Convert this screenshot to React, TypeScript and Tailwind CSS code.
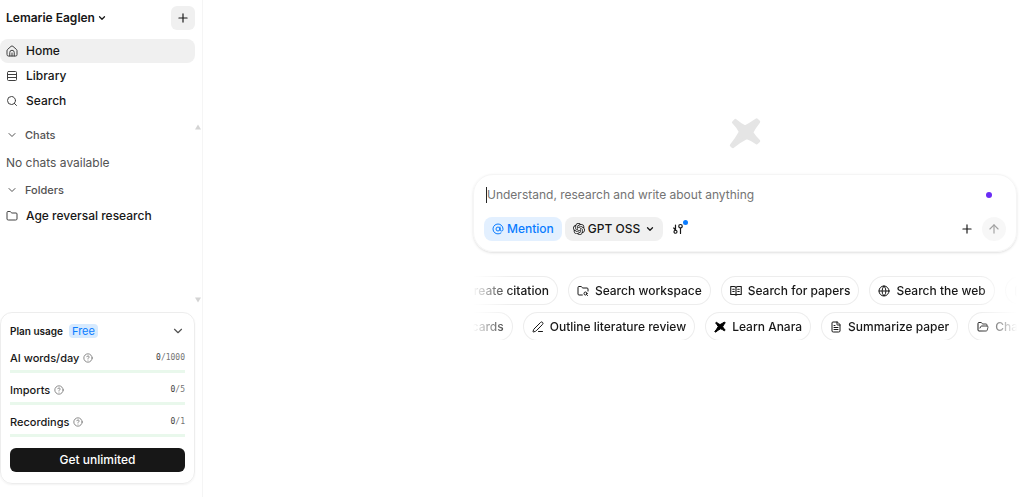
import { useState } from "react";
import type { ReactNode } from "react";
import {
  ArrowUp,
  AtSign,
  ChevronDown,
  CircleHelp,
  FileText,
  Folder,
  FolderOpen,
  FolderSearch,
  Globe,
  Layers,
  PenLine,
  Plus,
  Quote,
  Rows3,
  Search,
} from "lucide-react";
import { SiOpenai } from "react-icons/si";

interface Usage {
  label: string;
  used: number;
  limit: number;
}

interface Suggestion {
  label: string;
  icon: ReactNode;
}

const HomeIcon = () => (
  <svg viewBox="0 0 24 24" className="w-3 h-3 shrink-0" fill="none" stroke="currentColor" strokeWidth="2" strokeLinecap="round" strokeLinejoin="round">
    <path d="M2 11.2a3 3 0 0 1 1.100-2.300l7-6.200a3 3 0 0 1 3.800 0l7 6.200a3 3 0 0 1 1.100 2.300V19.500a2.500 2.500 0 0 1-2.500 2.500H4.500A2.500 2.500 0 0 1 2 19.500z" />
    <path d="M7.500 22v-7a4.500 4.500 0 0 1 9 0v7M12 16v6" />
  </svg>
);

const BookIcon = () => (
  <svg viewBox="0 0 24 24" className="w-3 h-3 shrink-0" fill="none" stroke="currentColor" strokeWidth="2.200" strokeLinecap="round" strokeLinejoin="round">
    <path d="M12 5C11 3.500 9.500 3 8 3H1.500v16H9c1.500 0 2.500.5 3 1.500.5-1 1.500-1.500 3-1.500h7.500V3H16c-1.500 0-3 .5-4 2zM12 5v15" />
    <path d="M5.500 8.500h3M5.500 13h3M15.500 8.500h3M15.500 13h3" />
  </svg>
);

const TuneIcon = () => (
  <svg viewBox="0 0 24 24" className="w-3 h-3" fill="none" stroke="currentColor" strokeWidth="2.400" strokeLinecap="round" strokeLinejoin="round">
    <path d="M7 4v10M17 10v11M3.500 10 7 14" />
    <circle cx="7" cy="17.500" r="3" />
    <circle cx="17" cy="6.500" r="3.500" />
  </svg>
);

const StarMark = ({ className }: { className: string }) => (
  <svg viewBox="0 0 30 30" className={className} fill="currentColor" stroke="currentColor" strokeWidth="2.500" strokeLinejoin="round">
    <path d="M6 3Q10 6.500 15 9 19.500 7 26 2.500L28 4.500Q24 9.500 21.500 14.500 24 18.500 28 22.500L26 24.500Q21 21 16.500 19.500 10.500 22.500 3.500 28L2 26.500Q7 20.500 10.500 14 8 9 4 5z" />
  </svg>
);

const navItems = [
  { label: "Home", icon: <HomeIcon />, active: true },
  { label: "Library", icon: <Rows3 className="w-3 h-3" />, active: false },
  { label: "Search", icon: <Search className="w-3 h-3" />, active: false },
];

const usages: Usage[] = [
  { label: "AI words/day", used: 0, limit: 1000 },
  { label: "Imports", used: 0, limit: 5 },
  { label: "Recordings", used: 0, limit: 1 },
];

const topSuggestions: Suggestion[] = [
  { label: "Create citation", icon: <Quote className="w-3 h-3" /> },
  { label: "Search workspace", icon: <FolderSearch className="w-3 h-3" /> },
  { label: "Search for papers", icon: <BookIcon /> },
  { label: "Search the web", icon: <Globe className="w-3 h-3" /> },
  { label: "Transcribe audio", icon: <FileText className="w-3 h-3" /> },
];

const bottomSuggestions: Suggestion[] = [
  { label: "Flashcards", icon: <Layers className="w-3 h-3" /> },
  { label: "Outline literature review", icon: <PenLine className="w-3 h-3" /> },
  { label: "Learn Anara", icon: <StarMark className="w-3 h-3 text-black" /> },
  { label: "Summarize paper", icon: <FileText className="w-3 h-3" /> },
  { label: "Chat with folder", icon: <FolderOpen className="w-3 h-3" /> },
];

const SectionHeader = ({ label }: { label: string }) => (
  <button className="flex h-6 items-center gap-[7px] px-1.5 text-[11px] font-medium text-neutral-600">
    <ChevronDown className="w-3 h-3" />
    {label}
  </button>
);

const SuggestionRow = ({ items, className }: { items: Suggestion[]; className: string }) => (
  <div className={`flex gap-2.5 ${className}`}>
    {items.map((item) => (
      <button
        key={item.label}
        className="flex h-[29px] shrink-0 items-center gap-1.5 whitespace-nowrap rounded-full border border-neutral-200/70 bg-white px-2 font-medium"
      >
        {item.icon}
        {item.label}
      </button>
    ))}
  </div>
);

const Sidebar = () => (
  <aside className="flex w-[203px] shrink-0 flex-col border-r border-neutral-100 pb-[13px]">
    <div className="flex items-center justify-between pl-1.5 pr-[7px] pt-1.5">
      <button className="flex items-center gap-0.5 font-semibold">
        Lemarie Eaglen
        <ChevronDown className="w-2.5 h-2.5" strokeWidth={3} />
      </button>
      <button aria-label="New" className="flex h-6 w-6 items-center justify-center rounded-md bg-[#f0f0f0]">
        <Plus className="w-3.5 h-3.5" />
      </button>
    </div>

    <nav className="mt-[9px] flex flex-col gap-px pr-[7px]">
      {navItems.map((item) => (
        <a
          key={item.label}
          href="#"
          className={`flex h-6 items-center gap-2 rounded-lg px-1.5 font-medium ${item.active ? "bg-[#f0f0f0]" : ""}`}
        >
          <span className="text-neutral-700">{item.icon}</span>
          {item.label}
        </a>
      ))}
    </nav>

    <div className="mt-2.5 flex flex-1 justify-between">
      <div>
        <SectionHeader label="Chats" />
        <p className="flex h-[31px] items-center px-1.5 text-neutral-600">No chats available</p>
        <SectionHeader label="Folders" />
        <a href="#" className="flex h-7 items-center gap-2 px-1.5 font-medium">
          <Folder className="w-3 h-3 text-neutral-700" />
          Age reversal research
        </a>
      </div>
      <div className="flex flex-col justify-between pb-px pr-px pt-px text-neutral-300">
        <svg viewBox="0 0 6 5" className="w-1.5 h-1.5" fill="currentColor">
          <path d="M3 0 6 5H0z" />
        </svg>
        <svg viewBox="0 0 6 5" className="w-1.5 h-1.5" fill="currentColor">
          <path d="M3 5 6 0H0z" />
        </svg>
      </div>
    </div>

    <section className="mr-[7px] mt-2 rounded-xl border border-neutral-200/70 px-[9px] pb-[11px] pt-2 shadow-xs">
      <div className="flex h-5 items-center justify-between">
        <div className="flex items-center gap-1.5">
          <h2 className="text-[10px] font-semibold">Plan usage</h2>
          <span className="rounded-sm bg-[#d6eaff] px-[3px] text-[11px] leading-[14px] text-[#0a7cff]">Free</span>
        </div>
        <button aria-label="Collapse plan usage">
          <ChevronDown className="w-3.5 h-3.5 text-neutral-600" />
        </button>
      </div>
      <div className="flex flex-col gap-2 pt-2">
        {usages.map((usage) => (
          <div key={usage.label} className="flex flex-col gap-[3px]">
            <div className="flex h-[18px] items-center justify-between">
              <span className="flex items-center gap-1 text-[11px] font-medium">
                {usage.label}
                <CircleHelp className="w-2.5 h-2.5 text-neutral-500" />
              </span>
              <span className="font-['DejaVu_Sans_Mono',monospace] text-[8px] text-neutral-500">
                <span className="text-neutral-700">{usage.used}</span>/{usage.limit}
              </span>
            </div>
            <div className="h-[3px] bg-[#e9f8ec]">
              <div className="h-full bg-green-500" style={{ width: `${(usage.used / usage.limit) * 100}%` }} />
            </div>
          </div>
        ))}
      </div>
      <button className="mt-[11px] h-6 w-full rounded-md bg-[#171717] font-medium text-white">Get unlimited</button>
    </section>
  </aside>
);

const App = () => {
  const [prompt, setPrompt] = useState("");

  return (
    <div className="flex min-h-screen bg-white font-['Inter',sans-serif] text-[12px] leading-4 text-neutral-900">
      <Sidebar />

      <main className="flex min-w-0 flex-1 flex-col items-end pr-[7px] pt-[117px]">
        <div className="flex w-full max-w-[544px] flex-col">
          <StarMark className="h-8 w-8 self-center text-neutral-200" />

          <form className="mt-[25px] rounded-[20px] border border-neutral-100 px-2.5 pb-2.5 pt-3 shadow-sm" onSubmit={(e) => e.preventDefault()}>
            <div className="flex h-4 items-center pl-0.5 pr-3.5">
              <span className="h-4 w-px bg-neutral-800" />
              <input
                type="text"
                aria-label="Prompt"
                placeholder="Understand, research and write about anything"
                className="min-w-0 flex-1 placeholder:text-neutral-500 focus:outline-none"
                value={prompt}
                onChange={(e) => setPrompt(e.target.value)}
              />
              <span className="h-1.5 w-1.5 rounded-full bg-[#6a2cf5]" />
            </div>
            <div className="mt-3.5 flex items-center justify-between">
              <div className="flex items-center gap-[3px]">
                <button className="flex h-6 items-center gap-[3px] rounded-lg bg-[#e3f0ff] px-2 font-medium text-[#0a7cff]">
                  <AtSign className="w-3 h-3" />
                  Mention
                </button>
                <button className="flex h-6 items-center gap-[3px] rounded-lg bg-[#f0f0f0] px-2 font-medium">
                  <SiOpenai className="w-3 h-3" />
                  GPT OSS
                  <ChevronDown className="ml-0.5 w-2.5 h-2.5" strokeWidth={3} />
                </button>
                <button aria-label="Settings" className="relative flex h-6 w-6 items-center justify-center">
                  <TuneIcon />
                  <span className="absolute right-0.5 top-[3px] h-[5px] w-[5px] rounded-full bg-[#0a7cff]" />
                </button>
              </div>
              <div className="flex items-center gap-[3px]">
                <button aria-label="Attach" className="flex h-6 w-6 items-center justify-center">
                  <Plus className="w-3.5 h-3.5" />
                </button>
                <button aria-label="Send" className="flex h-6 w-6 items-center justify-center rounded-full bg-neutral-100/80 text-neutral-400">
                  <ArrowUp className="w-3.5 h-3.5" />
                </button>
              </div>
            </div>
          </form>

          <div className="mt-6 flex h-16 flex-col gap-[7px] overflow-hidden mask-[linear-gradient(to_right,transparent,black_40px,black_calc(100%-40px),transparent)]">
            <SuggestionRow items={topSuggestions} className="-ml-[35px]" />
            <SuggestionRow items={bottomSuggestions} className="-ml-[59px]" />
          </div>
        </div>
      </main>
    </div>
  );
};

export default App;
